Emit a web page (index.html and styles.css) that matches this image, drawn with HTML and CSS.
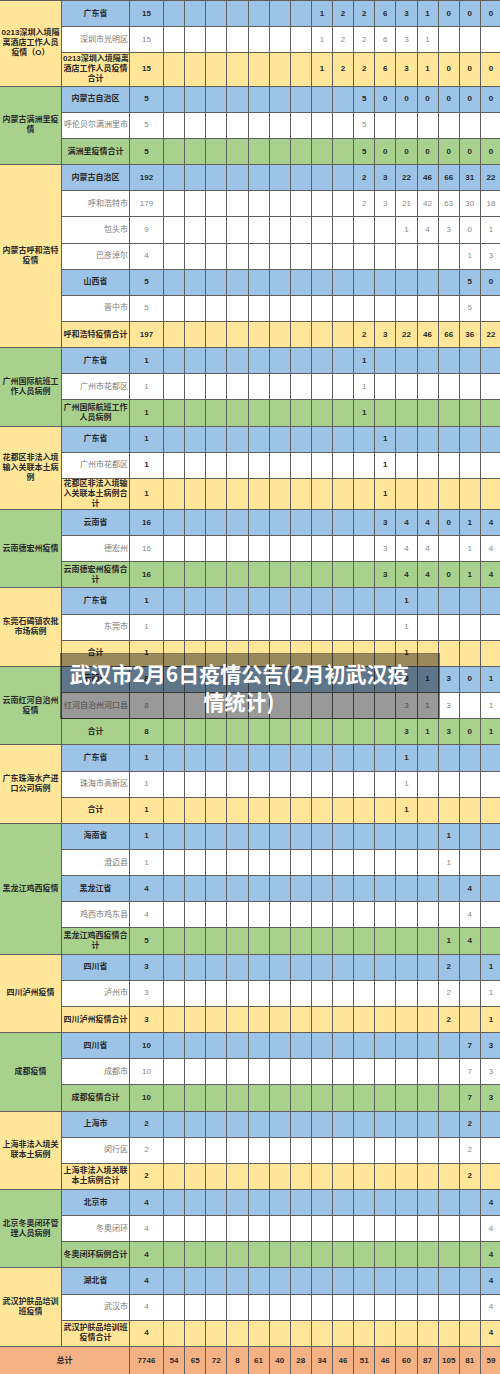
FILE: index.html
```html
<!DOCTYPE html>
<html lang="zh-CN">
<head>
<meta charset="utf-8">
<title>武汉市2月6日疫情公告</title>
<link rel="stylesheet" href="styles.css">
</head>
<body>
<div class="page">
<table class="sheet">
<colgroup>
<col class="c-grp"><col class="c-reg"><col class="c-tot">
<col class="c-d"><col class="c-d"><col class="c-d"><col class="c-d"><col class="c-d"><col class="c-d"><col class="c-d"><col class="c-d">
<col class="c-d"><col class="c-d"><col class="c-d"><col class="c-d"><col class="c-d"><col class="c-d"><col class="c-d"><col class="c-d">
</colgroup>
<tbody>
<!-- G1 -->
<tr class="b"><td class="grp gy" rowspan="3">0213深圳入境隔<br>离酒店工作人员<br>疫情（O）</td><td class="reg">广东省</td><td>15</td><td></td><td></td><td></td><td></td><td></td><td></td><td></td><td>1</td><td>2</td><td>2</td><td>6</td><td>3</td><td>1</td><td>0</td><td>0</td><td>0</td></tr>
<tr class="w"><td class="reg">深圳市光明区</td><td>15</td><td></td><td></td><td></td><td></td><td></td><td></td><td></td><td>1</td><td>2</td><td>2</td><td>6</td><td>3</td><td>1</td><td></td><td></td><td></td></tr>
<tr class="y t3"><td class="reg">0213深圳入境隔离<br>酒店工作人员疫情<br>合计</td><td>15</td><td></td><td></td><td></td><td></td><td></td><td></td><td></td><td>1</td><td>2</td><td>2</td><td>6</td><td>3</td><td>1</td><td>0</td><td>0</td><td>0</td></tr>
<!-- G2 -->
<tr class="b"><td class="grp gg" rowspan="3">内蒙古满洲里疫<br>情</td><td class="reg">内蒙古自治区</td><td>5</td><td></td><td></td><td></td><td></td><td></td><td></td><td></td><td></td><td></td><td>5</td><td>0</td><td>0</td><td>0</td><td>0</td><td>0</td><td>0</td></tr>
<tr class="w"><td class="reg">呼伦贝尔满洲里市</td><td>5</td><td></td><td></td><td></td><td></td><td></td><td></td><td></td><td></td><td></td><td>5</td><td></td><td></td><td></td><td></td><td></td><td></td></tr>
<tr class="g"><td class="reg">满洲里疫情合计</td><td>5</td><td></td><td></td><td></td><td></td><td></td><td></td><td></td><td></td><td></td><td>5</td><td>0</td><td>0</td><td>0</td><td>0</td><td>0</td><td>0</td></tr>
<!-- G3 -->
<tr class="b"><td class="grp gy" rowspan="7">内蒙古呼和浩特<br>疫情</td><td class="reg">内蒙古自治区</td><td>192</td><td></td><td></td><td></td><td></td><td></td><td></td><td></td><td></td><td></td><td>2</td><td>3</td><td>22</td><td>46</td><td>66</td><td>31</td><td>22</td></tr>
<tr class="w"><td class="reg">呼和浩特市</td><td>179</td><td></td><td></td><td></td><td></td><td></td><td></td><td></td><td></td><td></td><td>2</td><td>3</td><td>21</td><td>42</td><td>63</td><td>30</td><td>18</td></tr>
<tr class="w"><td class="reg">包头市</td><td>9</td><td></td><td></td><td></td><td></td><td></td><td></td><td></td><td></td><td></td><td></td><td></td><td>1</td><td>4</td><td>3</td><td>0</td><td>1</td></tr>
<tr class="w"><td class="reg">巴彦淖尔</td><td>4</td><td></td><td></td><td></td><td></td><td></td><td></td><td></td><td></td><td></td><td></td><td></td><td></td><td></td><td></td><td>1</td><td>3</td></tr>
<tr class="b"><td class="reg">山西省</td><td>5</td><td></td><td></td><td></td><td></td><td></td><td></td><td></td><td></td><td></td><td></td><td></td><td></td><td></td><td></td><td>5</td><td>0</td></tr>
<tr class="w"><td class="reg">晋中市</td><td>5</td><td></td><td></td><td></td><td></td><td></td><td></td><td></td><td></td><td></td><td></td><td></td><td></td><td></td><td></td><td>5</td><td></td></tr>
<tr class="y"><td class="reg">呼和浩特疫情合计</td><td>197</td><td></td><td></td><td></td><td></td><td></td><td></td><td></td><td></td><td></td><td>2</td><td>3</td><td>22</td><td>46</td><td>66</td><td>36</td><td>22</td></tr>
<!-- G4 -->
<tr class="b"><td class="grp gg" rowspan="3">广州国际航班工<br>作人员病例</td><td class="reg">广东省</td><td>1</td><td></td><td></td><td></td><td></td><td></td><td></td><td></td><td></td><td></td><td>1</td><td></td><td></td><td></td><td></td><td></td><td></td></tr>
<tr class="w"><td class="reg">广州市花都区</td><td>1</td><td></td><td></td><td></td><td></td><td></td><td></td><td></td><td></td><td></td><td>1</td><td></td><td></td><td></td><td></td><td></td><td></td></tr>
<tr class="g"><td class="reg">广州国际航班工作<br>人员病例</td><td>1</td><td></td><td></td><td></td><td></td><td></td><td></td><td></td><td></td><td></td><td>1</td><td></td><td></td><td></td><td></td><td></td><td></td></tr>
<!-- G5 -->
<tr class="b"><td class="grp gy" rowspan="3">花都区非法入境<br>输入关联本土病<br>例</td><td class="reg">广东省</td><td>1</td><td></td><td></td><td></td><td></td><td></td><td></td><td></td><td></td><td></td><td></td><td>1</td><td></td><td></td><td></td><td></td><td></td></tr>
<tr class="w"><td class="reg">广州市花都区</td><td class="strong">1</td><td></td><td></td><td></td><td></td><td></td><td></td><td></td><td></td><td></td><td></td><td class="strong">1</td><td></td><td></td><td></td><td></td><td></td></tr>
<tr class="y t2"><td class="reg">花都区非法入境输<br>入关联本土病例合<br>计</td><td>1</td><td></td><td></td><td></td><td></td><td></td><td></td><td></td><td></td><td></td><td></td><td>1</td><td></td><td></td><td></td><td></td><td></td></tr>
<!-- G6 -->
<tr class="b"><td class="grp gg" rowspan="3">云南德宏州疫情</td><td class="reg">云南省</td><td>16</td><td></td><td></td><td></td><td></td><td></td><td></td><td></td><td></td><td></td><td></td><td>3</td><td>4</td><td>4</td><td>0</td><td>1</td><td>4</td></tr>
<tr class="w"><td class="reg">德宏州</td><td>16</td><td></td><td></td><td></td><td></td><td></td><td></td><td></td><td></td><td></td><td></td><td>3</td><td>4</td><td>4</td><td></td><td>1</td><td>4</td></tr>
<tr class="g"><td class="reg">云南德宏州疫情合<br>计</td><td>16</td><td></td><td></td><td></td><td></td><td></td><td></td><td></td><td></td><td></td><td></td><td>3</td><td>4</td><td>4</td><td>0</td><td>1</td><td>4</td></tr>
<!-- G7 -->
<tr class="b"><td class="grp gy" rowspan="3">东莞石碣镇农批<br>市场病例</td><td class="reg">广东省</td><td>1</td><td></td><td></td><td></td><td></td><td></td><td></td><td></td><td></td><td></td><td></td><td></td><td>1</td><td></td><td></td><td></td><td></td></tr>
<tr class="w"><td class="reg">东莞市</td><td>1</td><td></td><td></td><td></td><td></td><td></td><td></td><td></td><td></td><td></td><td></td><td></td><td>1</td><td></td><td></td><td></td><td></td></tr>
<tr class="y"><td class="reg">合计</td><td>1</td><td></td><td></td><td></td><td></td><td></td><td></td><td></td><td></td><td></td><td></td><td></td><td>1</td><td></td><td></td><td></td><td></td></tr>
<!-- G8 -->
<tr class="b"><td class="grp gg" rowspan="3">云南红河自治州<br>疫情</td><td class="reg">云南省</td><td>8</td><td></td><td></td><td></td><td></td><td></td><td></td><td></td><td></td><td></td><td></td><td></td><td>3</td><td>1</td><td>3</td><td>0</td><td>1</td></tr>
<tr class="w"><td class="reg">红河自治州河口县</td><td>8</td><td></td><td></td><td></td><td></td><td></td><td></td><td></td><td></td><td></td><td></td><td></td><td>3</td><td>1</td><td>3</td><td></td><td>1</td></tr>
<tr class="g"><td class="reg">合计</td><td>8</td><td></td><td></td><td></td><td></td><td></td><td></td><td></td><td></td><td></td><td></td><td></td><td>3</td><td>1</td><td>3</td><td>0</td><td>1</td></tr>
<!-- G9 -->
<tr class="b"><td class="grp gy" rowspan="3">广东珠海水产进<br>口公司病例</td><td class="reg">广东省</td><td>1</td><td></td><td></td><td></td><td></td><td></td><td></td><td></td><td></td><td></td><td></td><td></td><td>1</td><td></td><td></td><td></td><td></td></tr>
<tr class="w"><td class="reg">珠海市高新区</td><td>1</td><td></td><td></td><td></td><td></td><td></td><td></td><td></td><td></td><td></td><td></td><td></td><td>1</td><td></td><td></td><td></td><td></td></tr>
<tr class="y"><td class="reg">合计</td><td>1</td><td></td><td></td><td></td><td></td><td></td><td></td><td></td><td></td><td></td><td></td><td></td><td>1</td><td></td><td></td><td></td><td></td></tr>
<!-- G10 -->
<tr class="b"><td class="grp gg" rowspan="5">黑龙江鸡西疫情</td><td class="reg">海南省</td><td>1</td><td></td><td></td><td></td><td></td><td></td><td></td><td></td><td></td><td></td><td></td><td></td><td></td><td></td><td>1</td><td></td><td></td></tr>
<tr class="w"><td class="reg">澄迈县</td><td>1</td><td></td><td></td><td></td><td></td><td></td><td></td><td></td><td></td><td></td><td></td><td></td><td></td><td></td><td>1</td><td></td><td></td></tr>
<tr class="b"><td class="reg">黑龙江省</td><td>4</td><td></td><td></td><td></td><td></td><td></td><td></td><td></td><td></td><td></td><td></td><td></td><td></td><td></td><td></td><td>4</td><td></td></tr>
<tr class="w"><td class="reg">鸡西市鸡东县</td><td>4</td><td></td><td></td><td></td><td></td><td></td><td></td><td></td><td></td><td></td><td></td><td></td><td></td><td></td><td></td><td>4</td><td></td></tr>
<tr class="g"><td class="reg">黑龙江鸡西疫情合<br>计</td><td>5</td><td></td><td></td><td></td><td></td><td></td><td></td><td></td><td></td><td></td><td></td><td></td><td></td><td></td><td>1</td><td>4</td><td></td></tr>
<!-- G11 -->
<tr class="b"><td class="grp gy" rowspan="3">四川泸州疫情</td><td class="reg">四川省</td><td>3</td><td></td><td></td><td></td><td></td><td></td><td></td><td></td><td></td><td></td><td></td><td></td><td></td><td></td><td>2</td><td></td><td>1</td></tr>
<tr class="w"><td class="reg">泸州市</td><td>3</td><td></td><td></td><td></td><td></td><td></td><td></td><td></td><td></td><td></td><td></td><td></td><td></td><td></td><td>2</td><td></td><td>1</td></tr>
<tr class="y"><td class="reg">四川泸州疫情合计</td><td>3</td><td></td><td></td><td></td><td></td><td></td><td></td><td></td><td></td><td></td><td></td><td></td><td></td><td></td><td>2</td><td></td><td>1</td></tr>
<!-- G12 -->
<tr class="b"><td class="grp gg" rowspan="3">成都疫情</td><td class="reg">四川省</td><td>10</td><td></td><td></td><td></td><td></td><td></td><td></td><td></td><td></td><td></td><td></td><td></td><td></td><td></td><td></td><td>7</td><td>3</td></tr>
<tr class="w"><td class="reg">成都市</td><td>10</td><td></td><td></td><td></td><td></td><td></td><td></td><td></td><td></td><td></td><td></td><td></td><td></td><td></td><td></td><td>7</td><td>3</td></tr>
<tr class="g"><td class="reg">成都疫情合计</td><td>10</td><td></td><td></td><td></td><td></td><td></td><td></td><td></td><td></td><td></td><td></td><td></td><td></td><td></td><td></td><td>7</td><td>3</td></tr>
<!-- G13 -->
<tr class="b"><td class="grp gy" rowspan="3">上海非法入境关<br>联本土病例</td><td class="reg">上海市</td><td>2</td><td></td><td></td><td></td><td></td><td></td><td></td><td></td><td></td><td></td><td></td><td></td><td></td><td></td><td></td><td>2</td><td></td></tr>
<tr class="w"><td class="reg">闵行区</td><td>2</td><td></td><td></td><td></td><td></td><td></td><td></td><td></td><td></td><td></td><td></td><td></td><td></td><td></td><td></td><td>2</td><td></td></tr>
<tr class="y"><td class="reg">上海非法入境关联<br>本土病例合计</td><td>2</td><td></td><td></td><td></td><td></td><td></td><td></td><td></td><td></td><td></td><td></td><td></td><td></td><td></td><td></td><td>2</td><td></td></tr>
<!-- G14 -->
<tr class="b"><td class="grp gg" rowspan="3">北京冬奥闭环管<br>理人员病例</td><td class="reg">北京市</td><td>4</td><td></td><td></td><td></td><td></td><td></td><td></td><td></td><td></td><td></td><td></td><td></td><td></td><td></td><td></td><td></td><td>4</td></tr>
<tr class="w"><td class="reg">冬奥闭环</td><td>4</td><td></td><td></td><td></td><td></td><td></td><td></td><td></td><td></td><td></td><td></td><td></td><td></td><td></td><td></td><td></td><td>4</td></tr>
<tr class="g"><td class="reg">冬奥闭环病例合计</td><td>4</td><td></td><td></td><td></td><td></td><td></td><td></td><td></td><td></td><td></td><td></td><td></td><td></td><td></td><td></td><td></td><td>4</td></tr>
<!-- G15 -->
<tr class="b"><td class="grp gy" rowspan="3">武汉护肤品培训<br>班疫情</td><td class="reg">湖北省</td><td>4</td><td></td><td></td><td></td><td></td><td></td><td></td><td></td><td></td><td></td><td></td><td></td><td></td><td></td><td></td><td></td><td>4</td></tr>
<tr class="w"><td class="reg">武汉市</td><td>4</td><td></td><td></td><td></td><td></td><td></td><td></td><td></td><td></td><td></td><td></td><td></td><td></td><td></td><td></td><td></td><td>4</td></tr>
<tr class="y"><td class="reg">武汉护肤品培训班<br>疫情合计</td><td>4</td><td></td><td></td><td></td><td></td><td></td><td></td><td></td><td></td><td></td><td></td><td></td><td></td><td></td><td></td><td></td><td>4</td></tr>
<!-- Total -->
<tr class="s"><td colspan="2" class="sum-label">总计</td><td>7746</td><td>54</td><td>65</td><td>72</td><td>8</td><td>61</td><td>40</td><td>28</td><td>34</td><td>46</td><td>51</td><td>46</td><td>60</td><td>87</td><td>105</td><td>81</td><td>59</td></tr>
</tbody>
</table>
<div class="banner">武汉市2月6日疫情公告(2月初武汉疫情统计)</div>
</div>
</body>
</html>
```
FILE: styles.css
```css
html, body {
  margin: 0;
  padding: 0;
  background: #ffffff;
}

.page {
  position: relative;
  width: 500px;
  height: 1374px;
  overflow: hidden;
}

.sheet {
  width: 502px;
  margin-left: -1px;
  border-collapse: collapse;
  table-layout: fixed;
  font-family: "Liberation Sans", "Noto Sans CJK SC", sans-serif;
  font-size: 8px;
  line-height: 10px;
  color: #2b2b2b;
}

.c-grp { width: 62px; }
.c-reg { width: 68px; }
.c-tot { width: 34px; }
.c-d { width: 21.125px; }

.sheet td {
  border: 1px solid #5f5f5f;
  padding: 0 1px;
  text-align: center;
  vertical-align: middle;
  font-weight: 700;
  white-space: nowrap;
  overflow: hidden;
}

.sheet tr { height: 26.17px; }
.sheet tr.t3 { height: 33.3px; }
.sheet tr.t2 { height: 29.6px; }
.sheet tr.s { height: 29px; }

tr.b { background: #9dc3e6; }
tr.w { background: #ffffff; }
tr.y { background: #ffe699; }
tr.g { background: #a9d18e; }
tr.s { background: #f4b183; }

tr.w td {
  font-weight: 400;
  color: #8a8a8a;
}

tr.w td.reg {
  text-align: right;
  padding-right: 1px;
  color: #7a7a7a;
}

tr.w td.strong {
  font-weight: 700;
  color: #2b2b2b;
}

.sheet td.grp {
  font-weight: 700;
  color: #2b2b2b;
  text-align: center;
}

.gy { background: #ffe699; }
.gg { background: #a9d18e; }

.sum-label {
  padding-left: 8px;
}

.banner {
  position: absolute;
  left: 60px;
  top: 653px;
  width: 380px;
  height: 66px;
  box-sizing: border-box;
  padding: 5px 30px 5px 8px;
  background: rgba(0, 0, 0, 0.4);
  border: 1px solid rgba(0, 0, 0, 0.12);
  color: #ffffff;
  font-family: "Noto Sans CJK SC", "Liberation Sans", sans-serif;
  font-weight: 700;
  font-size: 21px;
  line-height: 28px;
  text-align: center;
}
```
